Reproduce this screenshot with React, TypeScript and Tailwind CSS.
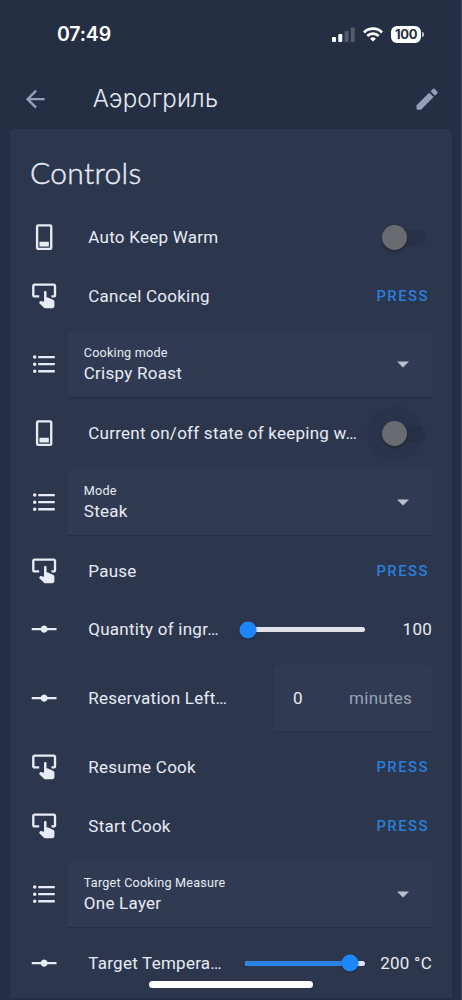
import React from "react";

const ICONS = {
  back: "M20 11V13H8L13.5 18.5L12.08 19.92L4.16 12L12.08 4.08L13.5 5.5L8 11H20Z",
  pencil:
    "M20.71 7.04C21.1 6.65 21.1 6 20.71 5.63L18.37 3.29C18 2.9 17.35 2.9 16.96 3.29L14.9 5.3L18.7 9.1M3 17.25V20.2C3 20.7 3.3 21 3.8 21H6.75L17.5 10.25L13.75 6.5L3 17.25Z",
  toggle:
    "M17 1H7A2 2 0 0 0 5 3V21A2 2 0 0 0 7 23H17A2 2 0 0 0 19 21V3A2 2 0 0 0 17 1M17 21H7V3H17V21M8 16H16V20H8V16Z",
  button:
    "M20.2 1.2H3.8C2.7 1.2 1.8 2.1 1.8 3.2V11.2C1.8 12.3 2.7 13.2 3.8 13.2H7.8V11.2H3.8V3.2H20.2V11.2H18.2V13.2H20.2C21.3 13.2 22.2 12.3 22.2 11.2V3.2C22.2 2.1 21.3 1.2 20.2 1.2M11.9 8.6C11.9 8.05 12.35 7.6 12.95 7.6C13.55 7.6 14 8.05 14 8.6V13L15.2 13.1L19.5 15C20.2 15.3 20.7 15.9 20.7 16.6V20.4C20.7 21.5 19.9 22.3 18.9 22.3H13C12.6 22.3 12.2 22.1 11.9 21.8L7.7 17.9L8.3 16.6C8.5 16.2 8.9 16 9.3 16.1L11.9 16.7V8.6Z",
  list: "M7 5H21V7H7V5M7 13V11H21V13H7M4 4.5A1.5 1.5 0 0 1 5.5 6A1.5 1.5 0 0 1 4 7.5A1.5 1.5 0 0 1 2.5 6A1.5 1.5 0 0 1 4 4.5M4 10.5A1.5 1.5 0 0 1 5.5 12A1.5 1.5 0 0 1 4 13.5A1.5 1.5 0 0 1 2.5 12A1.5 1.5 0 0 1 4 10.5M7 19V17H21V19H7M4 16.5A1.5 1.5 0 0 1 5.5 18A1.5 1.5 0 0 1 4 19.5A1.5 1.5 0 0 1 2.5 18A1.5 1.5 0 0 1 4 16.5Z",
  slider:
    "M1.5 11H9.17C9.6 9.8 10.7 9 12 9C13.3 9 14.4 9.8 14.83 11H22.5V13H14.83C14.4 14.2 13.3 15 12 15C10.7 15 9.6 14.2 9.17 13H1.5V11Z",
};

const Icon: React.FC<{ name: keyof typeof ICONS; className?: string }> = ({ name, className = "" }) => (
  <svg viewBox="0 0 24 24" fill="currentColor" className={`size-[28.3px] shrink-0 ${className}`}>
    <path d={ICONS[name]} />
  </svg>
);

type RowData =
  | { kind: "toggle"; label: string; ripple?: boolean }
  | { kind: "button"; label: string }
  | { kind: "select"; label: string; value: string }
  | { kind: "slider"; label: string; value: string; pct: number }
  | { kind: "number"; label: string; value: string; unit: string };

const ROWS: RowData[] = [
  { kind: "toggle", label: "Auto Keep Warm" },
  { kind: "button", label: "Cancel Cooking" },
  { kind: "select", label: "Cooking mode", value: "Crispy Roast" },
  { kind: "toggle", label: "Current on/off state of keeping w…", ripple: true },
  { kind: "select", label: "Mode", value: "Steak" },
  { kind: "button", label: "Pause" },
  { kind: "slider", label: "Quantity of ingr…", value: "100", pct: 2.5 },
  { kind: "number", label: "Reservation Left…", value: "0", unit: "minutes" },
  { kind: "button", label: "Resume Cook" },
  { kind: "button", label: "Start Cook" },
  { kind: "select", label: "Target Cooking Measure", value: "One Layer" },
  { kind: "slider", label: "Target Tempera…", value: "200 °C", pct: 87.5 },
];

const Toggle: React.FC<{ ripple?: boolean }> = ({ ripple }) => (
  <div className="mr-[6px] flex h-[17px] w-[43px] shrink-0 items-center rounded-full bg-[#273147]">
    <span
      className={`-ml-px size-[25px] rounded-full bg-[#696b70] ${
        ripple
          ? "shadow-[0_0_1px_15px_rgba(38,48,66,0.3),0_2px_3px_rgba(0,0,0,0.35)]"
          : "shadow-[0_2px_3px_rgba(0,0,0,0.35)]"
      }`}
    />
  </div>
);

const Slider: React.FC<{ pct: number }> = ({ pct }) => (
  <div className="relative h-[5px] w-[120px] shrink-0 rounded-full bg-[#e1e1ec]">
    <div className="h-full rounded-full bg-[#2b83e4]" style={{ width: `${pct}%` }} />
    <span
      className="absolute top-1/2 size-[17px] -translate-x-1/2 -translate-y-1/2 rounded-full bg-[#1d86f8] shadow-[0_1px_2px_rgba(0,0,0,0.3)]"
      style={{ left: `${pct}%` }}
    />
  </div>
);

const Label: React.FC<{ children: React.ReactNode }> = ({ children }) => (
  <span className="ml-[30px] flex-1 pt-px whitespace-nowrap">{children}</span>
);

const Row: React.FC<{ row: RowData }> = ({ row }) => {
  if (row.kind === "select") {
    return (
      <div className="flex h-[67px] items-center">
        <Icon name="list" />
        <div className="ml-[10px] flex h-full flex-1 items-center justify-between rounded-t-[4px] border-b border-[#253047] bg-[#303b53] pr-[22px] pl-[15.5px]">
          <div className="pt-px">
            <div className="text-[12.6px] leading-[18px] tracking-[0.22px]">{row.label}</div>
            <div className="leading-[23px]">{row.value}</div>
          </div>
          <svg viewBox="0 0 14 7" className="mt-px h-[7px] w-[14px]" fill="#b9bfcc">
            <path d="M1 0.5h12l-6 6z" />
          </svg>
        </div>
      </div>
    );
  }
  if (row.kind === "toggle") {
    return (
      <div className="flex h-[47px] items-center">
        <Icon name="toggle" />
        <Label>{row.label}</Label>
        <Toggle ripple={row.ripple} />
      </div>
    );
  }
  if (row.kind === "button") {
    return (
      <div className="flex h-[47px] items-center">
        <Icon name="button" />
        <Label>{row.label}</Label>
        <span className="mr-[3px] pt-px text-[14.9px] font-medium tracking-[1.45px] text-[#2a7fdb]">PRESS</span>
      </div>
    );
  }
  if (row.kind === "slider") {
    return (
      <div className="flex h-[47px] items-center">
        <Icon name="slider" />
        <Label>{row.label}</Label>
        <Slider pct={row.pct} />
        <span className="w-[67px] pt-px text-right whitespace-nowrap">{row.value}</span>
      </div>
    );
  }
  return (
    <div className="flex h-[67px] items-center">
      <Icon name="slider" />
      <Label>{row.label}</Label>
      <div className="flex h-full w-[158px] items-center justify-between rounded-t-[4px] border-b border-[#253047] bg-[#303b53] px-[20px] pt-[2px]">
        <span className="-ml-px">{row.value}</span>
        <span className="text-[#99a2b2]">{row.unit}</span>
      </div>
    </div>
  );
};

const StatusBar: React.FC = () => (
  <div className="flex h-[69px] items-center justify-between pr-[37px] pl-[57px]">
    <span className="pt-px font-['Inter'] text-[19.5px] font-semibold tracking-[-0.15px] text-white">07:49</span>
    <div className="flex items-center gap-[8px]">
      <svg viewBox="0 0 23 16" className="h-4 w-[23px]" fill="white">
        <rect x="0" y="10" width="4" height="5" rx="1" />
        <rect x="6.3" y="7" width="4" height="8" rx="1" />
        <rect x="12.6" y="4" width="4" height="11" rx="1" opacity="0.22" />
        <rect x="18.8" y="0.5" width="4" height="14.5" rx="1" opacity="0.22" />
      </svg>
      <svg viewBox="0 0 20 15" className="h-[15px] w-5" fill="none" stroke="white" strokeWidth="2.8">
        <path d="M1 5.4a12.8 12.8 0 0 1 18 0" />
        <path d="M4.3 9a8.1 8.1 0 0 1 11.4 0" />
        <path d="M10 14.6l-2.9-2.9a4.1 4.1 0 0 1 5.8 0z" fill="white" stroke="none" />
      </svg>
      <div className="flex items-center gap-px">
        <div className="flex h-[17px] w-[30px] items-center justify-center rounded-[6px] bg-white font-['Inter'] text-[13px] font-bold tracking-[-0.3px] text-[#242f44]">
          100
        </div>
        <div className="h-[5px] w-[2px] rounded-r-full bg-white/70" />
      </div>
    </div>
  </div>
);

export default function App() {
  return (
    <div className="relative h-[1000px] w-[462px] overflow-hidden border-r border-[#3c4960] bg-[#242f44] font-['Roboto',sans-serif] text-[17px] tracking-[0.25px] text-[#e8ebf4]">
      <StatusBar />
      <header className="flex h-[60px] items-center pr-[20px] pl-[20.5px] text-[#94a0b8]">
        <Icon name="back" />
        <h1 className="ml-[44px] flex-1 font-['Inter'] text-[24px] font-light tracking-[0.15px] text-[#e8ebf4]">Аэрогриль</h1>
        <Icon name="pencil" />
      </header>
      <main className="mr-[9px] ml-[10px] h-[869px] rounded-t-[5px] bg-[#2c374e] px-5">
        <h2 className="flex h-[84.5px] items-center pt-[2px] font-['Lato'] text-[30px] font-light tracking-[0.3px] [-webkit-text-stroke:0.4px_#e8ebf4]">
          Controls
        </h2>
        <div className="flex flex-col gap-[11.75px]">
          {ROWS.map((row) => (
            <Row key={row.label} row={row} />
          ))}
        </div>
      </main>
      <div className="absolute bottom-3 left-[149px] h-[7px] w-[164px] rounded-full bg-white" />
    </div>
  );
}
